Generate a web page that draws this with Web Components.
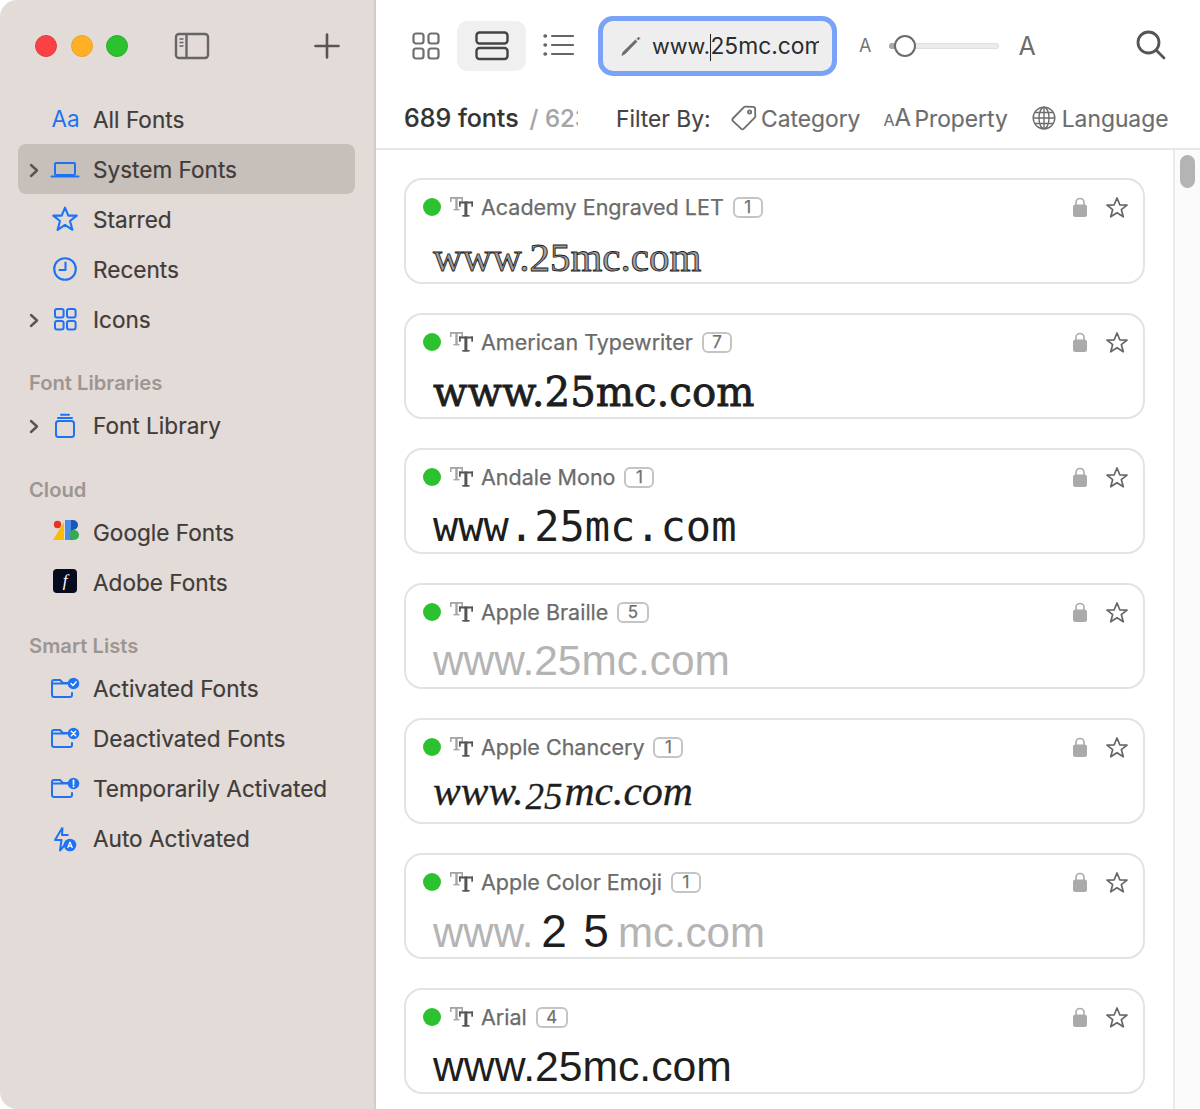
<!DOCTYPE html>
<html lang="en"><head><meta charset="utf-8"><title>Fonts</title>
<style>
html,body{margin:0;padding:0;background:#fff;height:1109px;overflow:hidden}
body{font-family:Inter,"Liberation Sans",sans-serif;-webkit-font-smoothing:antialiased}
</style></head><body>
<font-app>
  <app-sidebar slot="side">
    <nav-item icon="aa">All Fonts</nav-item>
    <nav-item icon="laptop" chevron selected>System Fonts</nav-item>
    <nav-item icon="star">Starred</nav-item>
    <nav-item icon="clock">Recents</nav-item>
    <nav-item icon="grid" chevron>Icons</nav-item>
    <nav-section label="Font Libraries" gap="26">
      <nav-item icon="stack" chevron>Font Library</nav-item>
    </nav-section>
    <nav-section label="Cloud" gap="27">
      <nav-item icon="google">Google Fonts</nav-item>
      <nav-item icon="adobe">Adobe Fonts</nav-item>
    </nav-section>
    <nav-section label="Smart Lists" gap="26">
      <nav-item icon="fcheck">Activated Fonts</nav-item>
      <nav-item icon="fx">Deactivated Fonts</nav-item>
      <nav-item icon="fbang">Temporarily Activated</nav-item>
      <nav-item icon="bolt">Auto Activated</nav-item>
    </nav-section>
  </app-sidebar>
  <app-toolbar slot="top"></app-toolbar>
  <font-list slot="list">
    <font-card name="Academy Engraved LET" count="1" kind="engraved"></font-card>
    <font-card name="American Typewriter" count="7" kind="typewriter"></font-card>
    <font-card name="Andale Mono" count="1" kind="mono"></font-card>
    <font-card name="Apple Braille" count="5" kind="braille"></font-card>
    <font-card name="Apple Chancery" count="1" kind="chancery"></font-card>
    <font-card name="Apple Color Emoji" count="1" kind="emoji"></font-card>
    <font-card name="Arial" count="4" kind="arial"></font-card>
  </font-list>
</font-app>
<script>
const B='#1f72f2';
const ICONS={
 laptop:`<svg width="30" height="20" viewBox="0 0 30 20" fill="none" stroke="${B}" stroke-width="2"><rect x="5" y="3" width="20" height="12" rx="1"/><path d="M1.5 16.5h27" stroke-linecap="round"/></svg>`,
 star:`<svg width="28" height="28" viewBox="0 0 28 28" fill="none" stroke="${B}" stroke-width="2.1" stroke-linejoin="round" style="margin-top:-2px"><path d="M14 2.6l3.3 8h8.4l-6.7 5.4 2.4 8.8L14 19.9l-7.4 4.9 2.4-8.8-6.7-5.4h8.4z"/></svg>`,
 clock:`<svg width="26" height="26" viewBox="0 0 26 26" fill="none" stroke="${B}" stroke-width="2.1" stroke-linecap="round" stroke-linejoin="round" style="margin-top:-2px"><circle cx="13" cy="13" r="10.8"/><path d="M13.5 6.5V14H7.5"/></svg>`,
 grid:`<svg width="24" height="24" viewBox="0 0 24 24" fill="none" stroke="${B}" stroke-width="2" style="margin-top:-2px"><rect x="2" y="2" width="8.6" height="8.6" rx="2"/><rect x="14" y="2" width="8.6" height="8.6" rx="2"/><rect x="2" y="14" width="8.6" height="8.6" rx="2"/><rect x="14" y="14" width="8.6" height="8.6" rx="2"/></svg>`,
 stack:`<svg width="22" height="26" viewBox="0 0 22 26" fill="none" stroke="${B}" stroke-width="2" stroke-linecap="round"><rect x="2" y="8" width="18" height="16" rx="2.5"/><path d="M4 5h14M7 1.8h8"/></svg>`,
 google:`<svg width="26" height="22" viewBox="0 0 26 22" style="margin:-4px 0 0 1px"><path d="M0 20L11 2v18z" fill="#fbbc04"/><circle cx="4.5" cy="4.5" r="3.7" fill="#ea3323"/><path d="M12 0h6v20h-6z" fill="#4a8de8"/><path d="M18 0h2a5 5 0 010 10h-2z" fill="#1a56b8"/><path d="M18 10a5 5 0 010 10z" fill="#1b6f38"/><circle cx="21" cy="15" r="5" fill="#34a853"/></svg>`,
 bolt:`<svg width="24" height="26" viewBox="0 0 24 26" fill="none" stroke="${B}" stroke-width="2" stroke-linejoin="round"><path d="M9.5 1.5L2 14h6.5L7 24.5 12.5 18M9.5 1.5L9 9h6.5"/><circle cx="17" cy="19" r="6.3" fill="${B}" stroke="none"/><path d="M14.6 22l2.4-6 2.4 6M15.4 20.2h3.2" stroke="#fff" stroke-width="1.2" fill="none"/></svg>`
};
const folder=m=>`<svg width="30" height="22" viewBox="0 0 30 22" fill="none" style="margin-top:-3px"><path d="M2 6.5V5a2 2 0 012-2h6l3 3h6M2 6.5h17M2 6.5V18a2 2 0 002 2h16a2 2 0 002-2v-2" stroke="${B}" stroke-width="2" stroke-linecap="round"/><circle cx="23.5" cy="6.5" r="5.8" fill="${B}"/>${m}</svg>`;
ICONS.fcheck=folder('<path d="M21 6.6l2 2 3.2-3.8" stroke="#fff" stroke-width="1.4" stroke-linecap="round" stroke-linejoin="round"/>');
ICONS.fx=folder('<path d="M21.3 4.3l4.4 4.4m0-4.4l-4.4 4.4" stroke="#fff" stroke-width="1.4" stroke-linecap="round"/>');
ICONS.fbang=folder('<path d="M23.5 3.3v4" stroke="#fff" stroke-width="1.7" stroke-linecap="round"/><circle cx="23.5" cy="9.6" r="1" fill="#fff"/>');

function def(tag,css,html,init){
  customElements.define(tag,class extends HTMLElement{
    connectedCallback(){
      if(this.shadowRoot)return;
      const s=this.attachShadow({mode:'open'});
      s.innerHTML=`<style>${css}</style>`+(typeof html==='function'?html(this):html);
      if(init)init(this,s);
    }
  });
}

def('font-app',`:host{display:flex;width:1200px;height:1109px;overflow:hidden;background:#fff}
.main{flex:1;min-width:0;display:flex;flex-direction:column;height:100%}`,
`<slot name="side"></slot><div class="main"><slot name="top"></slot><slot name="list"></slot></div>`);

def('app-sidebar',`:host{display:block;flex:none;width:376px;height:1109px;box-sizing:border-box;background:#e3dbd7;border-right:2px solid #d3ccc8;border-radius:17px 0 0 17px;color:#3f3c3a}
.bar{height:94px;box-sizing:border-box;display:flex;align-items:flex-start;padding:35px 0 0 35px}
.d{width:22px;height:22px;border-radius:50%;margin-right:14px;box-sizing:border-box}
.t{margin:-3px 0 0 32px}.p{margin:-3px 0 0 auto;padding-right:34px}
svg{display:block}`,
`<div class="bar"><div class="d" style="background:#fa4245;border:1px solid #e5383b"></div><div class="d" style="background:#ffb024;border:1px solid #eda31e;margin-right:13px"></div><div class="d" style="background:#2cc12f;border:1px solid #27b02a"></div>
<div class="t"><svg width="36" height="28" viewBox="0 0 36 28" fill="none" stroke="#666" stroke-width="2.4"><rect x="2" y="2" width="32" height="24" rx="3"/><path d="M12.5 2v24"/><path d="M5.5 7h4M5.5 10.5h4M5.5 14h4" stroke-width="1.4"/></svg></div>
<div class="p"><svg width="26" height="28" viewBox="0 0 26 28" stroke="#575553" stroke-width="2.6" stroke-linecap="round"><path d="M13 2.5v23M1.5 14h23"/></svg></div></div><slot></slot>`);

def('nav-section',`:host{display:block}
.h{height:26px;line-height:26px;margin:0 0 4px 29px;font-size:20.2px;font-weight:600;color:#9c9693}`,
e=>`<div class="h" style="margin-top:${e.getAttribute('gap')}px">${e.getAttribute('label')}</div><slot></slot>`);

def('nav-item',`:host{display:block;margin:0 19px 0 18px;height:50px}
.r{height:50px;box-sizing:border-box;padding:2px 0 0 11px;display:flex;align-items:center;border-radius:8px;font-size:22.6px;color:#3f3c3a;-webkit-text-stroke:.2px #3f3c3a}
:host([selected]) .r{background:#c7bfba}
.lb{margin-bottom:2px}
.c{width:10px;flex:none;display:flex}.i{width:34px;margin-left:9px;margin-right:11px;flex:none;display:flex;align-items:center;justify-content:center;-webkit-text-stroke:0}
.aa{color:${B};font-size:22.5px;line-height:1;font-family:Inter,sans-serif;margin:-2px 0 0 1px}
.ad{width:24px;height:24px;background:#060b1e;border-radius:4px;color:#fff;font:italic 17px/24px "Liberation Serif",serif;text-align:center;margin-top:-4px}
svg{display:block}`,
e=>{const n=e.getAttribute('icon');
 const ic=n==='aa'?'<span class="aa">Aa</span>':n==='adobe'?'<span class="ad">f</span>':ICONS[n];
 const ch=e.hasAttribute('chevron')?'<svg width="10" height="15" viewBox="0 0 10 15" fill="none" stroke="#555" stroke-width="2.4" stroke-linecap="round" stroke-linejoin="round"><path d="M2 2l6 5.5L2 13"/></svg>':'';
 return `<div class="r"><span class="c">${ch}</span><span class="i">${ic}</span><span class="lb"><slot></slot></span></div>`;});

def('app-toolbar',`:host{display:block;flex:none;height:150px;box-sizing:border-box;border-bottom:2px solid #e7e7e7;color:#6d6d6d}
svg{display:block}
.t{height:93px;display:flex;align-items:flex-start}
.g{margin:32px 0 0 36px}
.act{width:69px;height:50px;margin:21px 0 0 17px;border-radius:10px;background:#f0f0f0;display:flex;align-items:center;justify-content:center}
.l{margin:33px 0 0 17px}
.f{width:239px;height:60px;box-sizing:border-box;margin:16px 0 0 24px;border:5px solid #78a3f6;border-radius:15px;background:#eeeeee;display:flex;align-items:center;padding:0 13px 0 17px}
.tx{margin-left:10px;flex:1;overflow:hidden;white-space:nowrap;font-size:21.7px;color:#2b2b2b;position:relative;line-height:30px}
.tx span.m{font-size:22.8px}
.cur{display:inline-block;width:1.5px;height:27px;background:#222;vertical-align:-7px;margin:0 -1px 0 0}
.sa{font-size:18px;margin:36px 0 0 22px;color:#757575;line-height:20px}
.sl{width:110px;height:6px;margin:43px 0 0 18px;background:#ebebeb;border-radius:3px;position:relative;box-shadow:inset 0 0 0 1px #e0e0e0}
.sl i{position:absolute;left:0;top:0;width:10px;height:6px;background:#aaa;border-radius:3px}
.sl b{position:absolute;left:5px;top:-8px;width:22px;height:22px;box-sizing:border-box;border:2px solid #6b6b6b;border-radius:50%;background:#fff}
.sb{font-size:25px;margin:33px 0 0 19px;color:#6c6c6c;line-height:26px}
.se{margin:30px 0 0 100px}
.r{height:55px;display:flex;align-items:center;font-size:22.8px;white-space:nowrap;padding-bottom:5px;box-sizing:border-box;-webkit-text-stroke:.15px currentColor}
.n{margin-left:28px;width:174px;overflow:hidden;font-weight:500;font-size:25px;color:#333;flex:none;margin-right:38px}
.n span{font-weight:500;font-size:24px;color:#a5a5a5;margin-left:11px}
.fb{color:#444;width:115px;flex:none}
.ic{margin-right:4px}
.aa{color:#6d6d6d;width:31px;flex:none;line-height:1}.aa small{font-size:16px}.aa big{font-size:24px}`,
`<div class="t">
<div class="g"><svg width="28" height="28" viewBox="0 0 28 28" fill="none" stroke="#6f6f6f" stroke-width="2.2"><rect x="1.5" y="1.5" width="10" height="10" rx="2.5"/><rect x="16.5" y="1.5" width="10" height="10" rx="2.5"/><rect x="1.5" y="16.5" width="10" height="10" rx="2.5"/><rect x="16.5" y="16.5" width="10" height="10" rx="2.5"/></svg></div>
<div class="act"><svg width="34" height="30" viewBox="0 0 34 30" fill="none" stroke="#444" stroke-width="2.4"><rect x="1.5" y="1.5" width="31" height="11" rx="3"/><rect x="1.5" y="17" width="31" height="11" rx="3"/></svg></div>
<div class="l"><svg width="31" height="24" viewBox="0 0 31 24" fill="none" stroke="#666" stroke-width="2.2" stroke-linecap="round"><path d="M9 3h21M9 12h21M9 21h21"/><path d="M2 3h.5M2 12h.5M2 21h.5" stroke-width="3.4"/></svg></div>
<div class="f"><svg width="22" height="22" viewBox="0 0 22 22" fill="none" stroke="#6a6a6a" stroke-linecap="round" style="flex:none"><path d="M2 20L3 17.2 15.4 5 17 6.6 4.8 19z" fill="#6a6a6a" stroke-width=".8" stroke-linejoin="round"/><path d="M17.4 3.4l1.2-1.2 1.2 1.2-1.2 1.2z" fill="#6a6a6a" stroke-width="1"/></svg><div class="tx">www.<span class="cur"></span><span class="m">25mc.com</span></div></div>
<div class="sa">A</div><div class="sl"><i></i><b></b></div><div class="sb">A</div>
<div class="se"><svg width="30" height="30" viewBox="0 0 30 30" fill="none" stroke="#555" stroke-width="2.8" stroke-linecap="round"><circle cx="12.5" cy="12.5" r="10.5"/><path d="M20.5 20.5l7.5 7.5"/></svg></div>
</div>
<div class="r"><div class="n">689 fonts<span>/ 623</span></div><div class="fb">Filter By:</div>
<svg class="ic" width="26" height="26" viewBox="0 0 26 26" fill="none" stroke="#6d6d6d" stroke-width="1.8" stroke-linejoin="round" style="flex:none"><path d="M1.8 13.5L13 2.2a2 2 0 011.5-.6l8 .3a1.6 1.6 0 011.6 1.6l.2 7.6a2 2 0 01-.6 1.5L12.6 23.8a1.6 1.6 0 01-2.3 0l-8.5-8a1.6 1.6 0 010-2.3z"/><circle cx="18.6" cy="7" r="1.6"/></svg>
<span style="margin-right:23px">Category</span>
<span class="aa"><small>A</small><big>A</big></span><span style="margin-right:24px">Property</span>
<svg class="ic" width="24" height="24" viewBox="0 0 24 24" fill="none" stroke="#6d6d6d" stroke-width="1.4" style="flex:none;margin-right:6px"><circle cx="12" cy="12" r="10.8"/><ellipse cx="12" cy="12" rx="5" ry="10.8"/><path d="M12 1v22M1.2 12h21.6M3 6.5h18M3 17.5h18"/></svg>
<span>Language</span></div>`);

def('font-list',`:host{display:flex;flex:1;min-height:0;overflow:hidden}
.c{flex:1;min-width:0;box-sizing:border-box;padding:28px 28px 0;display:flex;flex-direction:column;gap:29px}
.s{width:27px;flex:none;box-sizing:border-box;border-left:2px solid #ebebeb;background:#fbfbfb;padding:5px 5px 0 5px}
.s i{display:block;width:15px;height:33px;border-radius:8px;background:#b4b4b4}`,
`<div class="c"><slot></slot></div><div class="s"><i></i></div>`);

const KINDS={
 engraved:{css:'font:41px/44px "Liberation Serif",serif;color:#a0a0a0;-webkit-text-stroke:.9px #222;margin-top:17px',t:'www.25mc.com'},
 typewriter:{css:'font:40.3px/44px "DejaVu Serif",serif;color:#1e1e1e;-webkit-text-stroke:.8px #1e1e1e;margin-top:18px',t:'www.25mc.com'},
 mono:{css:'font:42px/44px "DejaVu Sans Mono",monospace;color:#1e1e1e;margin-top:17px',t:'www.25mc.com'},
 braille:{css:'font:42.4px/44px "Liberation Sans",sans-serif;color:#b4b4b4;margin-top:16px',t:'www.25mc.com'},
 chancery:{css:'font:italic 41.6px/44px "Liberation Serif",serif;color:#1e1e1e;-webkit-text-stroke:.3px #1e1e1e;margin-top:11px',t:'www.<i>25</i>mc.com'},
 emoji:{css:'font:42px/44px "Liberation Sans",sans-serif;color:#b4b4b4;margin-top:18px',t:'www.<b>2</b><b>5</b>mc.com'},
 arial:{css:'font:42.7px/44px "Liberation Sans",sans-serif;color:#1e1e1e;margin-top:16px',t:'www.25mc.com'}
};
def('font-card',`:host{display:block;flex:none;width:741px;height:106px;box-sizing:border-box;border:2px solid #e3e3e3;border-radius:18px;background:#fff}
.h{height:22px;margin:16px 0 0 17px;padding-right:14px;display:flex;align-items:center;color:#6b6b6b;font-size:21.5px;-webkit-text-stroke:.25px #6b6b6b}
.d{width:18px;height:18px;border-radius:50%;background:#2cc12f;flex:none}
.tt{margin:0 7px 0 9px;flex:none;display:block}
.b{margin-left:9px;min-width:30px;height:21px;box-sizing:border-box;border:2px solid #c4c4c4;border-radius:6px;font-size:17px;line-height:17px;text-align:center;padding:0 8.5px;color:#707070}
.lk{margin-left:auto;flex:none;display:block}.st{margin:2px 0 0 18px;flex:none;display:block}
.s{margin-left:27px;white-space:nowrap;height:44px}
.s b{font-weight:400;font-size:46px;line-height:40px;color:#1e1e1e;display:inline-block;padding:0 7.7px 0 8px}
.s b+b{padding:0 9px 0 8.7px}
.s i{font-size:37px;vertical-align:-4px;padding:0 2px}`,
e=>{const k=KINDS[e.getAttribute('kind')];return `<div class="h"><span class="d"></span>
<svg class="tt" width="24" height="22" viewBox="0 0 24 22"><g fill="#a4a4a4"><rect x="0" y="1" width="13" height="1.8"/><rect x="0" y="1" width="1.5" height="5"/><rect x="11.5" y="1" width="1.5" height="5"/><rect x="5.3" y="1" width="2.4" height="13"/><rect x="3.5" y="13" width="6" height="1.4"/></g><g fill="#555"><rect x="9" y="5.5" width="14" height="2"/><rect x="9" y="5.5" width="1.7" height="5.2"/><rect x="21.3" y="5.5" width="1.7" height="5.2"/><rect x="14.4" y="5.5" width="3" height="15"/><rect x="12.2" y="19" width="7.4" height="1.6"/></g></svg>
<span>${e.getAttribute('name')}</span><span class="b">${e.getAttribute('count')}</span>
<svg class="lk" width="14" height="20" viewBox="0 0 14 20"><path d="M3 9V5.5a4 4 0 018 0V9" fill="none" stroke="#aaa" stroke-width="1.6"/><rect x="0" y="7.5" width="14" height="12.5" rx="2.5" fill="#aaa"/></svg>
<svg class="st" width="24" height="24" viewBox="0 0 24 24" fill="none" stroke="#666" stroke-width="1.7" stroke-linejoin="round"><path d="M12 2l2.8 6.8 7.2.3-5.7 4.5 2 7.2-6.3-4.1-6.3 4.1 2-7.2L2 9.1l7.2-.3z"/></svg></div>
<div class="s" style='${k.css}'>${k.t}</div>`;});
</script>
</body></html>
